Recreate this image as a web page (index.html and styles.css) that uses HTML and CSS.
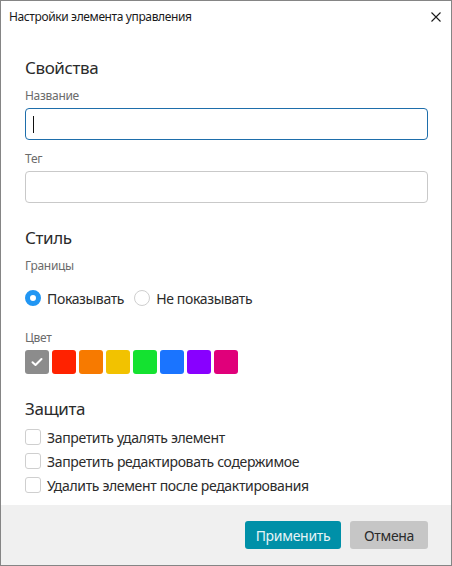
FILE: index.html
```html
<!DOCTYPE html>
<html lang="ru">
<head>
<meta charset="utf-8">
<title>Настройки элемента управления</title>
<link rel="stylesheet" href="styles.css">
</head>
<body>
<div class="window">
  <div class="titlebar">
    <span class="title">Настройки элемента управления</span>
    <span class="close">
      <svg width="10" height="10" viewBox="0 0 10 10"><path d="M0.5 0.5 L9.5 9.5 M9.5 0.5 L0.5 9.5" stroke="#1a1a1a" stroke-width="1.1" fill="none"/></svg>
    </span>
  </div>
  <div class="content">
    <h2 class="section first">Свойства</h2>
    <div class="label">Название</div>
    <div class="input focused"><span class="caret"></span></div>
    <div class="label spaced">Тег</div>
    <div class="input"></div>

    <h2 class="section">Стиль</h2>
    <div class="label tight">Границы</div>
    <div class="radios">
      <label class="radio"><span class="dot on"></span>Показывать</label>
      <label class="radio"><span class="dot"></span>Не показывать</label>
    </div>
    <div class="label color-label">Цвет</div>
    <div class="swatches">
      <span class="swatch sel" style="background:#8c8c8c"><svg width="12" height="10" viewBox="0 0 12 10"><path d="M1.5 5.2 L4.5 8 L10.5 2" stroke="#fff" stroke-width="2" fill="none" stroke-linecap="round" stroke-linejoin="round"/></svg></span>
      <span class="swatch" style="background:#ff2200"></span>
      <span class="swatch" style="background:#f77a00"></span>
      <span class="swatch" style="background:#f2c200"></span>
      <span class="swatch" style="background:#14e230"></span>
      <span class="swatch" style="background:#1a74ff"></span>
      <span class="swatch" style="background:#8800ff"></span>
      <span class="swatch" style="background:#e0007a"></span>
    </div>

    <h2 class="section">Защита</h2>
    <div class="checks">
      <label class="check"><span class="box"></span>Запретить удалять элемент</label>
      <label class="check"><span class="box"></span>Запретить редактировать содержимое</label>
      <label class="check"><span class="box"></span>Удалить элемент после редактирования</label>
    </div>
  </div>
  <div class="footer">
    <button class="btn primary">Применить</button>
    <button class="btn secondary">Отмена</button>
  </div>
</div>
</body>
</html>
```
FILE: styles.css
```css
* { box-sizing: border-box; }
html, body { margin: 0; padding: 0; background: #fff; }
body { font-family: "Noto Sans", "Open Sans", sans-serif; color: #2b2b2b; }

.window {
  width: 452px;
  height: 566px;
  border: 1px solid #858585;
  display: flex;
  flex-direction: column;
  background: #fff;
}

.titlebar {
  height: 31px;
  display: flex;
  align-items: center;
  justify-content: space-between;
  padding: 0 10px 0 8px;
}
.title { font-size: 12px; color: #1a1a1a; letter-spacing: -0.38px; }
.close { width: 10px; height: 10px; display: flex; }
.close svg { display: block; }

.content { padding: 0 23px 0 24px; }

.section {
  margin: 21px 0 6px;
  font-size: 17px;
  font-weight: 400;
  line-height: 28px;
  color: #2b2b2b;
  letter-spacing: -0.4px;
}
.section.first { margin-top: 22px; }

.label {
  font-size: 12px;
  line-height: 16px;
  color: #6b6b6b;
  margin-bottom: 4px;
  letter-spacing: -0.3px;
}
.label.spaced { margin-top: 11px; }
.label.tight { margin-top: 2px; margin-bottom: 14px; }
.label.color-label { margin-top: 22px; }

.input {
  height: 32px;
  border: 1px solid #c9c9c9;
  border-radius: 4px;
  position: relative;
}
.input.focused { border-color: #1e6eab; }
.caret {
  position: absolute;
  left: 7px;
  top: 7px;
  width: 1px;
  height: 17px;
  background: #111;
}

.radios { display: flex; gap: 10px; height: 20px; align-items: center; }
.radio { display: flex; align-items: center; gap: 6px; font-size: 14px; color: #2b2b2b; letter-spacing: -0.35px; }
.dot {
  width: 16px; height: 16px; border-radius: 50%;
  border: 1px solid #cfcfcf; background: #fff;
}
.dot.on { border: 5px solid #2196f3; }

.swatches { display: flex; gap: 3px; }
.swatch {
  width: 24px; height: 24px; border-radius: 3px;
  display: flex; align-items: center; justify-content: center;
}

.checks { display: flex; flex-direction: column; margin-top: -4px; }
.check {
  display: flex; align-items: center; gap: 6px;
  height: 24px; font-size: 14px; color: #2b2b2b; letter-spacing: -0.35px;
}
.box {
  width: 16px; height: 16px; border: 1px solid #cfcfcf; border-radius: 3px; background: #fff;
}

.footer {
  margin-top: auto;
  height: 60px;
  background: #f0f0f0;
  display: flex;
  justify-content: flex-end;
  align-items: flex-start;
  padding: 16px 23px 0 0;
  gap: 9px;
}
.btn {
  height: 28px;
  border: none;
  border-radius: 3px;
  font-family: inherit;
  font-size: 14px;
  letter-spacing: -0.3px;
  padding: 0;
}
.primary { width: 96px; background: #0090a8; color: #e6f4f7; }
.secondary { width: 78px; background: #c6c6c6; color: #2b2b2b; }
```
